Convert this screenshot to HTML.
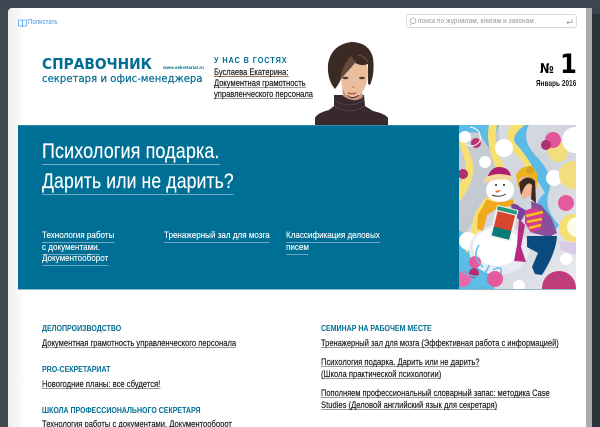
<!DOCTYPE html>
<html lang="ru"><head><meta charset="utf-8"><title>Справочник секретаря</title>
<style>
html,body{margin:0;padding:0;width:600px;height:427px;overflow:hidden;background:#3a444c}
*{box-sizing:border-box}
body{position:relative;font-family:"Liberation Sans",sans-serif}
div,a,svg{position:absolute;white-space:nowrap}
a{color:inherit;text-decoration:none}
.u{color:#111;font-size:9px;line-height:7px;border-bottom:1px solid #9a9a9a;transform:scaleX(.847);transform-origin:0 0;-webkit-text-stroke:.15px #222}
.h{color:#006d92;font-size:8.6px;font-weight:bold;line-height:12px;transform:scaleX(.815);transform-origin:0 0}
.w{color:#fff;font-size:9.6px;line-height:12px;border-bottom:1px solid #6ea8bf;transform:scaleX(.84);transform-origin:0 0;-webkit-text-stroke:.12px #fff}
.big{color:#fff;font-size:21.2px;line-height:25px;height:26px;border-bottom:1px solid #76abc0;letter-spacing:.15px;transform-origin:0 0;-webkit-text-stroke:.15px #fff}
</style></head><body>
<div style="left:0;top:0;width:600px;height:8px;background:#3d4751"></div>
<div style="left:0;top:8px;width:8px;height:419px;background:#3f4a52"></div>
<div style="left:586px;top:8px;width:6px;height:419px;background:#a9adb0"></div>
<div style="left:592px;top:14px;width:8px;height:413px;background:#2c343a"></div>
<div style="left:8px;top:8px;width:578px;height:419px;background:linear-gradient(90deg,#eceef0 0,#fff 17px);border-top-left-radius:4px"></div>

<svg style="left:18px;top:19px" width="9" height="8" viewBox="0 0 9 8"><path d="M.5 1h3.2l.8.6.8-.6h3.2v6H5.3l-.8.5-.8-.5H.5zM4.5 1.6V7.5" fill="#fff" stroke="#4ea3ea" stroke-width=".8"/></svg>
<div style="left:27.5px;top:17px;font-size:7px;line-height:12px;color:#3d94e3;transform:scaleX(.87);transform-origin:0 0">Полистать</div>

<div style="left:406px;top:14px;width:171px;height:14px;border:1px solid #d8dadc;border-radius:3px;background:#fff"></div>
<svg style="left:409px;top:17px" width="9" height="9" viewBox="0 0 9 9"><circle cx="4" cy="3.8" r="2.8" fill="none" stroke="#a8abae" stroke-width=".8"/><path d="M2 7 L1 8.3" stroke="#a8abae" stroke-width=".9"/></svg>
<div style="left:418px;top:15px;font-size:7.4px;line-height:12px;color:#8f9396;letter-spacing:.12px;transform:scaleX(.866);transform-origin:0 0">поиск по журналам, книгам и законам</div>
<svg style="left:565px;top:18px" width="9" height="8" viewBox="0 0 9 8"><path d="M7 1v3.6H2M3.6 3 2 4.6l1.6 1.6" fill="none" stroke="#999" stroke-width=".8"/></svg>

<div style="left:42px;top:55px;font-family:'DejaVu Sans',sans-serif;font-weight:bold;font-size:15px;line-height:18px;color:#006d92;transform:scaleX(.917);transform-origin:0 0">СПРАВОЧНИК</div>
<div style="left:163px;top:65px;font-size:4.6px;line-height:6px;font-weight:bold;color:#006d92">www.sekretariat.ru</div>
<div style="left:42px;top:72px;font-family:'DejaVu Sans',sans-serif;font-size:10.6px;line-height:14px;color:#006d92;letter-spacing:.06px;transform:scaleX(.947);transform-origin:0 0;-webkit-text-stroke:.2px #006d92">секретаря и офис-менеджера</div>

<div style="left:214px;top:54px;font-size:8.4px;line-height:12px;font-weight:bold;color:#006d92;letter-spacing:1.05px;transform:scaleX(.87);transform-origin:0 0">У НАС В ГОСТЯХ</div>
<div class="u" style="left:214px;top:69px;font-size:8.8px;border-bottom-color:#a5774a;transform:scaleX(.86)">Буслаева Екатерина:</div>
<div class="u" style="left:214px;top:80px;font-size:8.8px;transform:scaleX(.86)">Документная грамотность</div>
<div class="u" style="left:214px;top:91px;font-size:8.8px;transform:scaleX(.86)">управленческого персонала</div>

<svg style="left:315px;top:40px" width="74" height="85" viewBox="0 0 74 85">
<path d="M0 85V78Q2 73 14 70L19 66 19 55H49L50 66 58 71Q71 74 73 78V85Z" fill="#38292d"/>
<path d="M19 66Q34 76 50 66M19 60Q34 70 49 60" fill="none" stroke="#54434a" stroke-width=".8"/>
<path d="M25 30Q25 18 38 18 53 18 53 32 53 46 46 53 40 58 36 57 29 54 27 47Z" fill="#ecbd9d"/>
<path d="M27 47Q29 54 36 58 42 59 47 52L48 57Q40 64 28 56Z" fill="#c9977b"/>
<path d="M20 49Q12 40 13 24 16 5 36 2 54 2 58 18 60 34 55 45L53 44 53 24Q46 27 39 22 33 30 27 37 24 44 20 49Z" fill="#3b2924"/>
<path d="M25 40 41 22 36 16Q27 26 25 40Z" fill="#664a3d"/>
<path d="M43 15Q50 16 53 22" stroke="#6d5144" fill="none"/>
<ellipse cx="30.5" cy="38" rx="3" ry="1.3" fill="#4c3c34"/><ellipse cx="47" cy="38" rx="3" ry="1.3" fill="#4c3c34"/>
<path d="M37 46l3 1-3 1Z" fill="#b98468"/>
<path d="M33 53q4 1.6 8 0" stroke="#b5604f" stroke-width="1.5" fill="none"/>
</svg>

<div style="left:539.5px;top:57px;font-family:'DejaVu Sans',sans-serif;font-size:13.5px;line-height:24px;font-weight:bold;color:#000;transform:scaleX(.85);transform-origin:0 0">№</div>
<div style="left:559.5px;top:47px;font-family:'DejaVu Sans',sans-serif;font-size:27px;line-height:36px;font-weight:bold;color:#000;transform:scaleX(.9);transform-origin:0 0">1</div>
<div style="left:536px;top:78px;font-size:8.1px;line-height:12px;color:#111;font-weight:bold;letter-spacing:.14px;transform:scaleX(.78);transform-origin:0 0">Январь 2016</div>

<div style="left:18px;top:125px;width:441px;height:165px;background:#006f95;border-top:1px solid #2f8cab;border-bottom:1px solid #8db8ca"></div>
<div class="big" style="left:42px;top:139px;transform:scaleX(.847)">Психология подарка.</div>
<div class="big" style="left:42px;top:169px;transform:scaleX(.83)">Дарить или не дарить?</div>
<div class="w" style="left:42px;top:230px">Технология работы</div>
<div class="w" style="left:42px;top:242px">с документами.</div>
<div class="w" style="left:42px;top:253px">Документооборот</div>
<div class="w" style="left:164px;top:230px">Тренажерный зал для мозга</div>
<div class="w" style="left:286px;top:230px">Классификация деловых</div>
<div class="w" style="left:286px;top:242px">писем</div>

<svg style="left:459px;top:125px" width="117" height="165" viewBox="0 0 117 165">
<defs><linearGradient id="s" x1="0" y1="0" x2="1" y2="1"><stop offset="0" stop-color="#dfe3e8"/><stop offset=".5" stop-color="#cfd3db"/><stop offset="1" stop-color="#e9ebf0"/></linearGradient></defs>
<rect width="117" height="165" fill="url(#s)"/>
<path d="M0 120Q10 100 28 78L40 70V0H0Z" fill="#b4b9c2" opacity=".5"/>
<path d="M0 0H40Q32 14 42 40 30 24 20 8 6 6 0 10ZM0 105V165H36L24 122Z" fill="#5bbce6"/>
<path d="M60 0Q50 16 60 32 76 50 86 68 72 78 82 98L92 112 100 100Q84 84 90 66 96 50 76 30 62 14 70 0Z" fill="#5cbbe6"/>
<path d="M30 0Q26 20 38 45 42 60 30 70 14 84 12 106L3 118 8 128 20 112Q22 92 36 78 50 62 44 40 34 18 38 0Z" fill="#f7df72"/>
<path d="M52 0Q42 16 58 30 68 42 70 52L76 46Q66 28 56 18 52 10 66 0Z" fill="#f7df72"/>
<path d="M0 8Q8 18 14 38 16 54 4 72L0 76V60Q8 48 6 36 2 22 0 18Z" fill="#f7df72"/>
<circle cx="45" cy="23" r="9" fill="#fff"/><circle cx="6" cy="12" r="6" fill="#fff"/><circle cx="26" cy="37" r="6" fill="#fff"/>
<circle cx="17" cy="18" r="5" fill="#b8326f"/><circle cx="4" cy="49" r="5" fill="#b02f6f"/>
<circle cx="99" cy="27" r="10" fill="#f2de7e"/><circle cx="94" cy="15" r="8" fill="#e1559b"/><circle cx="87" cy="20" r="5" fill="#b2306f"/>
<circle cx="116" cy="15" r="13" fill="#fff"/><circle cx="95" cy="53" r="8" fill="#fff"/>
<circle cx="114" cy="50" r="14" fill="#f2de7e"/><circle cx="107" cy="78" r="8" fill="#e45a9c"/>
<circle cx="114" cy="103" r="14" fill="#f6de74"/><circle cx="118" cy="102" r="10" fill="#fdfbe9"/>
<path d="M100 116 117 118V130L102 125Z" fill="#d7cbe8"/>
<circle cx="9" cy="116" r="9" fill="#fff"/><circle cx="107" cy="134" r="6" fill="#fff"/><circle cx="60" cy="161" r="6" fill="#fff"/>
<circle cx="100" cy="163" r="17" fill="#c13c7b"/>
<ellipse cx="40" cy="125" rx="30" ry="25" fill="#e8eaf3"/><ellipse cx="38" cy="122" rx="24" ry="19" fill="#fff"/>
<ellipse cx="41" cy="65" rx="14" ry="12" fill="#fff"/>
<path d="M28 53Q32 42 40 42 50 42 52 51 40 47 30 54Z" fill="#ae206f"/><path d="M24 56Q28 50 30 51 40 47 52 51L54 56Q40 52 26 58Z" fill="#f4d79d"/>
<path d="M36 66l7-1-5 3z" fill="#f26b22"/><path d="M33 70q7 3 14-1" stroke="#333" fill="none"/>
<circle cx="37" cy="60" r="1" fill="#222"/><circle cx="45" cy="60" r="1" fill="#222"/>
<path d="M28 74Q38 80 54 74L55 81 40 82 28 90 24 106 18 104 19 90Z" fill="#f0a91c"/>
<path d="M59 62 57 50Q62 40 71 42 81 45 78 60L76 68 72 64Z" fill="#ecb31e"/><circle cx="71" cy="45" r="4" fill="#dca21c"/>
<path d="M60 66V54Q68 48 75 56L74 70 64 74Z" fill="#f0b892"/><path d="M60 58Q68 48 76 56L77 78 72 74 73 60Q68 54 62 70Z" fill="#3e2622"/>
<path d="M52 80Q56 77 61 82L68 86 62 96 54 90Z" fill="#7d3f9c"/>
<path d="M72 76 82 80 92 92 98 108 90 112 74 108Z" fill="#8a4f9c"/>
<path d="M66 86Q76 80 84 88L82 104 72 108 66 98Z" fill="#d23d8f"/><path d="M67 91 84 87M68 97 83 94M70 103 82 100" stroke="#f6c221" stroke-width="2.6"/>
<path d="M60 94 66 100 62 122 67 137 55 136 58 120Z" fill="#b72a82"/>
<path d="M68 111H98Q97 128 83 150L76 149 73 142 79 128 68 122Z" fill="#0a4a7e"/>
<g transform="rotate(14 45 98)"><rect x="34" y="82" width="22" height="33" fill="#f4f4ee"/><rect x="36" y="88" width="18" height="18" fill="#d9462f"/><rect x="36" y="104" width="18" height="9" fill="#0a7b78"/><rect x="35" y="83" width="20" height="4" fill="#27997f"/></g>
<circle cx="16" cy="137" r="6" fill="#e45a9c"/><circle cx="15" cy="148" r="5" fill="#b2306f"/><circle cx="36" cy="154" r="8" fill="#e45a9c"/><circle cx="4" cy="154" r="8" fill="#e76ba8"/>
<path d="M0 145Q24 160 30 140M34 145q10-6 8 4M10 165Q22 152 36 165M20 120q-8 12 4 22" stroke="#63bfe6" stroke-width="1.5" fill="none"/>
<path d="M11 2q12 2 10 14-6 8-14 3" stroke="#fff" fill="none"/>
</svg>
<div style="left:18px;top:289px;width:558px;height:1px;background:#8db8ca"></div>

<div class="h" style="left:42px;top:322px">ДЕЛОПРОИЗВОДСТВО</div>
<div class="u" style="left:42px;top:340px">Документная грамотность управленческого персонала</div>
<div class="h" style="left:42px;top:363px">PRO-СЕКРЕТАРИАТ</div>
<div class="u" style="left:42px;top:381px">Новогодние планы: все сбудется!</div>
<div class="h" style="left:42px;top:404px">ШКОЛА ПРОФЕССИОНАЛЬНОГО СЕКРЕТАРЯ</div>
<div class="u" style="left:42px;top:421px">Технология работы с документами. Документооборот</div>

<div class="h" style="left:321px;top:322px">СЕМИНАР НА РАБОЧЕМ МЕСТЕ</div>
<div class="u" style="left:321px;top:340px;transform:scaleX(.833)">Тренажерный зал для мозга (Эффективная работа с информацией)</div>
<div class="u" style="left:321px;top:359px">Психология подарка. Дарить или не дарить?</div>
<div class="u" style="left:321px;top:371px">(Школа практической психологии)</div>
<div class="u" style="left:321px;top:390px;transform:scaleX(.832)">Пополняем профессиональный словарный запас: методика Case</div>
<div class="u" style="left:321px;top:402px">Studies (Деловой английский язык для секретаря)</div>
</body></html>
